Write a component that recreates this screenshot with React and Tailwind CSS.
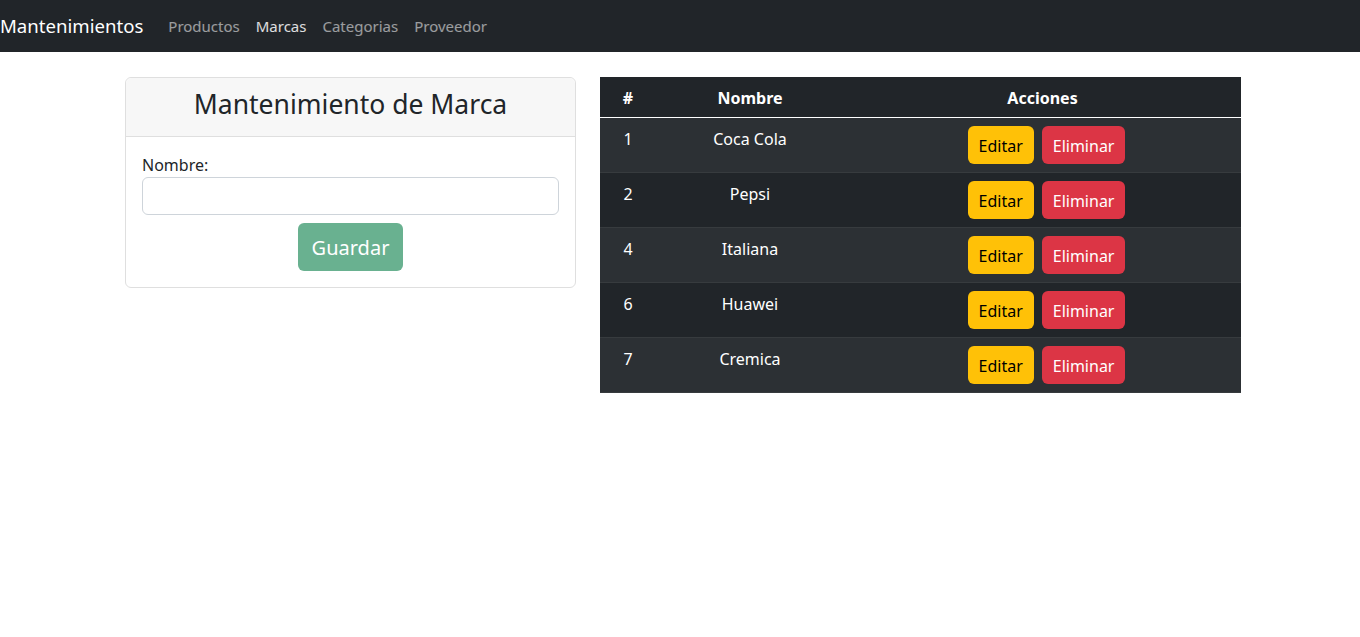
import React, { useState } from "react";

const navLinks = [
  { label: "Productos", active: false },
  { label: "Marcas", active: true },
  { label: "Categorias", active: false },
  { label: "Proveedor", active: false },
];

const marcas = [
  { id: 1, nombre: "Coca Cola" },
  { id: 2, nombre: "Pepsi" },
  { id: 4, nombre: "Italiana" },
  { id: 6, nombre: "Huawei" },
  { id: 7, nombre: "Cremica" },
];

export default function App() {
  const [nombre, setNombre] = useState("");

  return (
    <div className="min-h-screen bg-white font-['Noto_Sans',sans-serif] text-[#212529]">
      <nav className="flex h-[52px] items-center bg-[#212529]">
        <a className="mr-[17px] text-[18.6px] leading-[30px] text-white">Mantenimientos</a>
        <ul className="flex">
          {navLinks.map((link) => (
            <li key={link.label}>
              <a
                className={`px-2 text-[15px] leading-6 ${
                  link.active ? "text-white/85" : "text-white/55"
                }`}
              >
                {link.label}
              </a>
            </li>
          ))}
        </ul>
      </nav>

      <div className="mt-[25px] flex items-start gap-6 pl-[125px]">
        <div className="w-[451px] rounded-md border border-[#dfdfdf]">
          <div className="rounded-t-md border-b border-[#dfdfdf] bg-[#f7f7f7] px-4 pb-[15px] pt-[9px]">
            <h3 className="text-center text-[26.5px] leading-[34px]">Mantenimiento de Marca</h3>
          </div>
          <div className="p-4">
            <label className="block pt-px text-base leading-[23px]">Nombre:</label>
            <input
              value={nombre}
              onChange={(e) => setNombre(e.target.value)}
              className="block h-[38px] w-full rounded-md border border-[#ced4da] px-3 outline-none"
            />
            <div className="mt-2 flex justify-center">
              <button
                type="button"
                disabled
                className="h-12 rounded-md bg-[#69b190] px-[14px] pt-px text-[20px] text-white"
              >
                Guardar
              </button>
            </div>
          </div>
        </div>

        <table className="w-[641px] border-collapse text-base leading-6 text-white">
          <thead>
            <tr className="bg-[#212529]">
              <th className="w-[56px] pb-[7px] pl-2 pr-2 pt-[9px] text-center font-bold">#</th>
              <th className="w-[188px] pb-[7px] pl-2 pr-2 pt-[9px] text-center font-bold">Nombre</th>
              <th className="pb-[7px] pl-2 pr-2 pt-[9px] text-center font-bold">Acciones</th>
            </tr>
          </thead>
          <tbody className="border-t border-white">
            {marcas.map((m, i) => (
              <tr
                key={m.id}
                className={`border-b border-[#373b3e] ${i % 2 === 0 ? "bg-[#2c3034]" : "bg-[#212529]"}`}
              >
                <td className="px-2 pb-2 pt-[9px] align-top text-center">{m.id}</td>
                <td className="px-2 pb-2 pt-[9px] align-top text-center">{m.nombre}</td>
                <td className="p-2 align-top text-center">
                  <div className="flex justify-center gap-2 pl-2">
                    <button className="h-[38px] rounded-md bg-[#ffc107] px-[11px] pt-px text-black">Editar</button>
                    <button className="h-[38px] rounded-md bg-[#dc3545] px-[11px] pt-px text-white">Eliminar</button>
                  </div>
                </td>
              </tr>
            ))}
          </tbody>
        </table>
      </div>
    </div>
  );
}
